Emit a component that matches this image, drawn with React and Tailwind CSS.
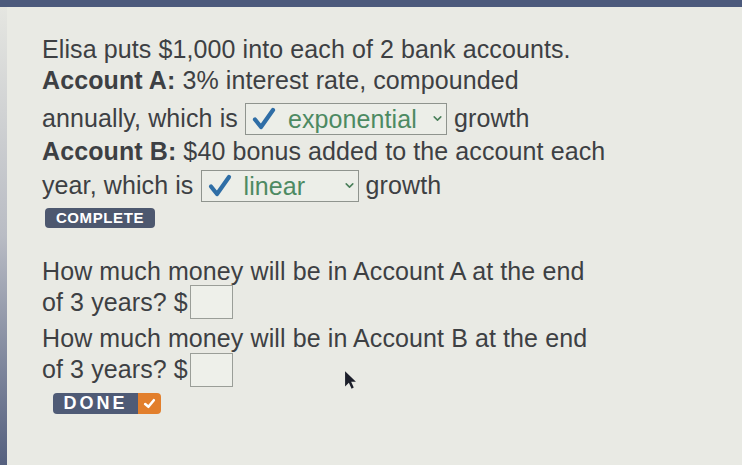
import React from 'react';

const Check = ({ className }) => (
  <svg viewBox="0 0 24 24" className={className} fill="none">
    <path d="M3 12.5 L9 20 L21 3" stroke="#2f6ea6" strokeWidth="4.2" strokeLinecap="round" strokeLinejoin="round" />
  </svg>
);

const Chevron = () => (
  <svg viewBox="0 0 10 10" className="w-[11px] h-[11px]" fill="none">
    <path d="M2 3.5 L5 6.5 L8 3.5" stroke="#4a7f5a" strokeWidth="1.4" strokeLinecap="round" strokeLinejoin="round" />
  </svg>
);

// answered dropdown: check mark, chosen value, caret
const Choice = ({ value, width }) => (
  <span
    className={`inline-flex items-center h-[32px] border border-[#8f948e] bg-[#eceee8] pl-[6px] pr-[3px] align-middle -mt-[3px] ${width}`}
  >
    <Check className="w-[24px] h-[24px] mr-[12px]" />
    <span className="text-[#4d8a62] flex-1">{value}</span>
    <Chevron />
  </span>
);

const AnswerBox = () => (
  <span className="inline-block w-[43px] h-[34px] ml-[2px] border border-[#9a9e98] bg-[#eef0ea] align-middle -mt-[4px]" />
);

export default function App() {
  return (
    <div className="w-[742px] h-[465px] bg-[#e9eae4] flex flex-col overflow-hidden relative font-['Liberation_Sans',Arial,sans-serif] text-[#3d4043]">
      <div className="h-[7px] bg-[#4c5a7c]" />
      <div className="flex-1 flex">
        <div className="w-[7px] bg-gradient-to-b from-[#e5e6e1] via-[#b9bcc4] to-[#55607e]" />
        <div className="flex-1 pl-[35px] pt-[27px] text-[25px] tracking-[0.1px]">
          <div className="leading-[31px]">Elisa puts $1,000 into each of 2 bank accounts.</div>
          <div className="leading-[31px]">
            <span className="font-bold">Account A:</span> 3% interest rate, compounded
          </div>
          <div className="leading-[36px] mt-[4px]">
            annually, which is <Choice value="exponential" width="w-[202px]" /> growth
          </div>
          <div className="leading-[31px]">
            <span className="font-bold">Account B:</span> $40 bonus added to the account each
          </div>
          <div className="leading-[36px]">
            year, which is <Choice value="linear" width="w-[158px]" /> growth
          </div>
          <div className="mt-[5px] ml-[3px] flex">
            <span className="inline-flex items-center justify-center w-[110px] h-[20px] rounded-[4px] bg-[#4d586f] text-white text-[15px] font-black tracking-[0.6px]">
              COMPLETE
            </span>
          </div>

          <div className="mt-[28px] leading-[31px]">How much money will be in Account A at the end</div>
          <div className="leading-[31px]">
            of 3 years? $<AnswerBox />
          </div>
          <div className="leading-[31px] mt-[4px]">How much money will be in Account B at the end</div>
          <div className="leading-[31px]">
            of 3 years? $<AnswerBox />
          </div>
          <div className="mt-[6px] ml-[11px] flex">
            <div className="inline-flex h-[21px] rounded-[4px] overflow-hidden">
              <span className="w-[85px] bg-[#4f5b76] text-white text-[18px] font-bold tracking-[3px] flex items-center justify-center">
                DONE
              </span>
              <span className="w-[23px] bg-[#e27f2c] flex items-center justify-center">
                <svg viewBox="0 0 12 12" className="w-[13px] h-[13px]" fill="none">
                  <path d="M2 6.5 L5 9 L10 3" stroke="#ffffff" strokeWidth="2.4" strokeLinecap="round" strokeLinejoin="round" />
                </svg>
              </span>
            </div>
          </div>
        </div>
      </div>

      {/* mouse pointer */}
      <svg viewBox="0 0 12 18" className="absolute left-[344px] top-[370px] w-[13px] h-[20px]">
        <path d="M1 1 L1 15 L4.5 11.5 L7 17 L9 16 L6.6 10.6 L11 10.6 Z" fill="#1c1f2a" />
      </svg>
    </div>
  );
}
